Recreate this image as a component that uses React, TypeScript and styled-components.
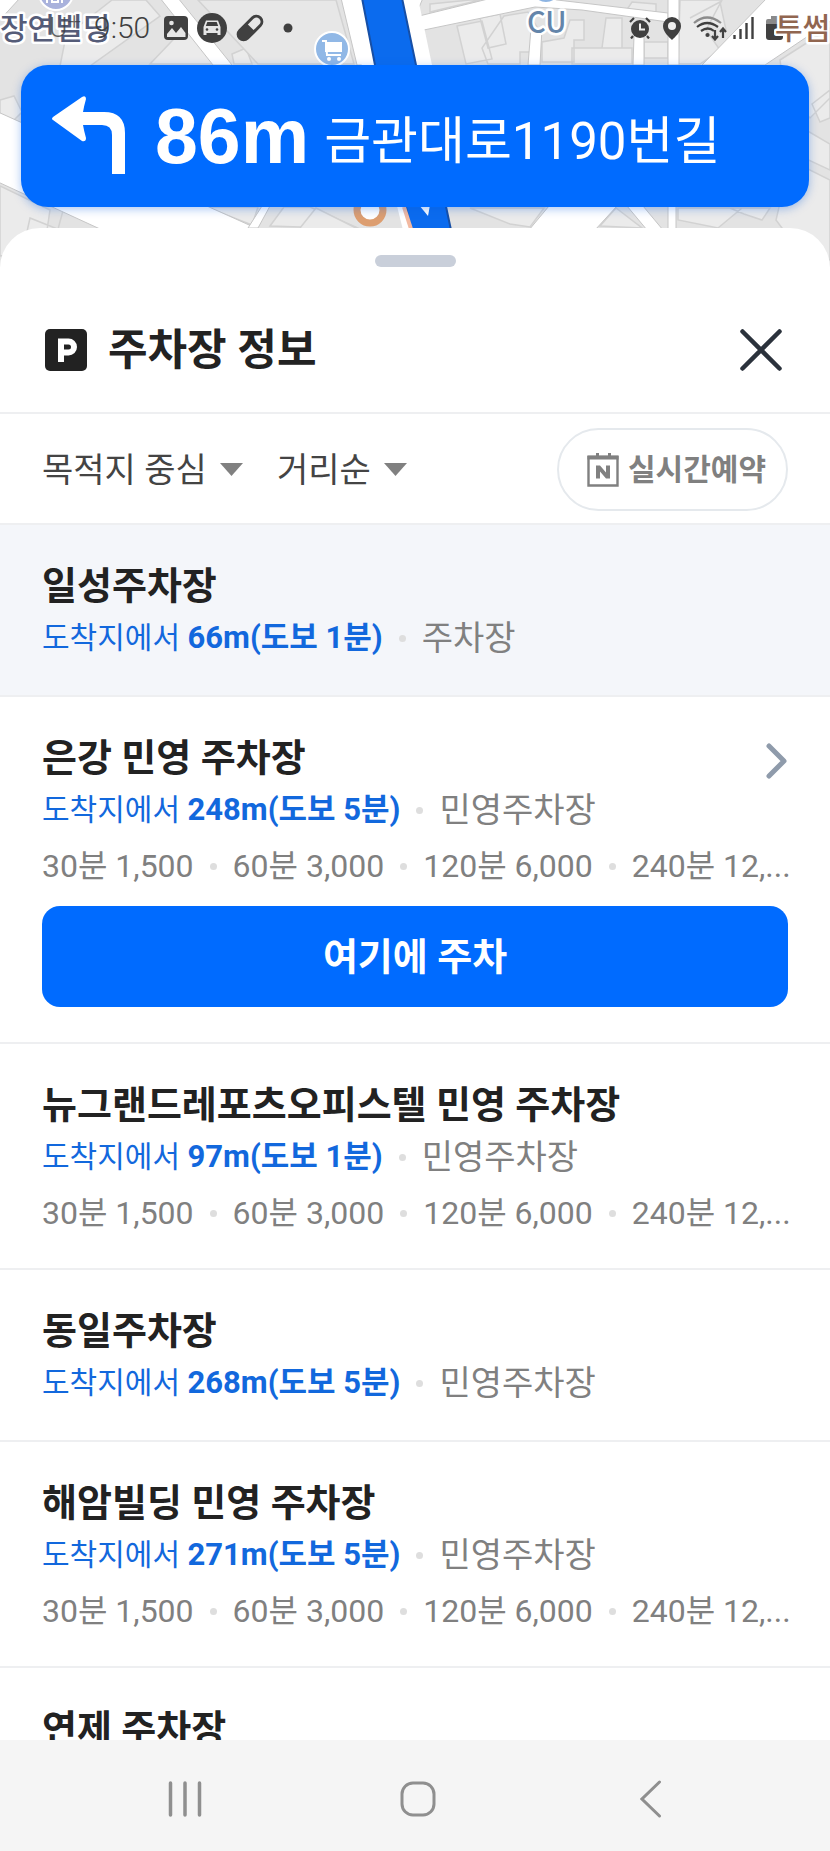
import React from 'react';
import styled, { createGlobalStyle } from 'styled-components';

const Global = createGlobalStyle`
  * { box-sizing: border-box; }
  html, body { margin: 0; background: #fff; }
  body, button, select { font-family: Roboto, 'Noto Sans CJK KR', sans-serif; }
  button, select { margin: 0; padding: 0; border: 0; background: none; color: inherit; cursor: pointer; }
  h1, h2, p, ul { margin: 0; padding: 0; }
  ul { list-style: none; }
  svg { display: block; flex: none; }
`;

const Screen = styled.div`
  display: flex;
  flex-direction: column;
  height: 100vh;
  overflow: hidden;
`;

const MapArea = styled.header`
  position: relative;
  flex: none;
  padding-bottom: 61px;
  overflow: hidden;
  background: #e3e3e3;
`;

const MapDrawing = styled.svg`
  position: absolute;
  inset: 0;
  width: 100%;
  height: 100%;
`;

const StatusBar = styled.div`
  position: relative;
  display: flex;
  align-items: center;
  justify-content: space-between;
  height: 56px;
  padding: 0 47px 0 49px;
  color: #404040;
`;

const StatusGroup = styled.div<{ $gap: number }>`
  display: flex;
  align-items: center;
  gap: ${(p) => p.$gap}px;
`;

const Carrier = styled.span`
  display: flex;
  margin-right: 4px;
  font-size: 28px;
  font-weight: 300;
  line-height: 32px;
  opacity: 0.8;

  sup {
    font-size: 24px;
    line-height: 20px;
  }
`;

const Clock = styled.time`
  margin-right: 5px;
  font-size: 30px;
  font-weight: 300;
  line-height: 36px;
`;

const Banner = styled.div`
  position: relative;
  display: flex;
  align-items: center;
  height: 142px;
  margin: 9px 21px 0;
  padding: 0 31px;
  border-radius: 27px;
  background: #006bff;
  box-shadow: 0 2px 10px rgba(0, 90, 220, 0.35);
  color: #fff;
  white-space: nowrap;
`;

const Distance = styled.strong`
  margin-left: 29px;
  font-family: 'Liberation Sans', sans-serif;
  font-size: 77px;
  line-height: 92px;
`;

const Road = styled.span`
  margin: 12px 0 0 15px;
  font-size: 51px;
  line-height: 72px;
`;

const Sheet = styled.main`
  position: relative;
  display: flex;
  flex-direction: column;
  flex: 1;
  min-height: 0;
  margin-top: -40px;
  border-radius: 40px 40px 0 0;
  background: #fff;
`;

const Handle = styled.div`
  flex: none;
  align-self: center;
  width: 81px;
  height: 12px;
  margin: 27px 0 21px;
  border-radius: 6px;
  background: #c9cfda;
`;

const TitleRow = styled.div`
  display: flex;
  flex: none;
  align-items: center;
  gap: 21px;
  height: 126px;
  padding: 0 48px 0 45px;
  border-bottom: 2px solid #eeeff1;
`;

const Title = styled.h1`
  flex: 1;
  color: #222;
  font-size: 43px;
  line-height: 60px;
`;

const IconButton = styled.button`
  display: grid;
  place-items: center;
  height: 56px;
`;

const FilterRow = styled.div`
  display: flex;
  flex: none;
  align-items: center;
  gap: 34px;
  height: 111px;
  padding: 2px 42px 0;
  border-bottom: 2px solid #eeeff1;
`;

const Filter = styled.label`
  display: flex;
  align-items: center;
  gap: 13px;
`;

const FilterSelect = styled.select`
  appearance: none;
  color: #444;
  font-size: 34px;
  line-height: 48px;
`;

const ReserveButton = styled.button`
  display: flex;
  align-items: center;
  gap: 9px;
  height: 83px;
  margin-left: auto;
  padding: 0 20px 0 28px;
  border: 2px solid #e5e9ed;
  border-radius: 42px;
  color: #808080;
  font-size: 30px;
  font-weight: 700;
  line-height: 44px;
`;

const List = styled.ul`
  flex: 1;
  min-height: 0;
  overflow-y: auto;
  scrollbar-width: none;
`;

const Lot = styled.li<{ $selected?: boolean }>`
  padding: 36px 42px 28px;
  border-bottom: 2px solid #eeeff1;
  background: ${(p) => (p.$selected ? '#f4f6fa' : '#fff')};
`;

const LotHead = styled.div`
  display: flex;
  align-items: flex-start;
  justify-content: space-between;
  height: 48px;
`;

const LotName = styled.h2`
  color: #222;
  font-size: 38px;
  line-height: 50px;
`;

const Line = styled.p<{ $height: number }>`
  display: flex;
  align-items: center;
  height: ${(p) => p.$height}px;
  color: #808080;
  font-size: 32px;
  line-height: 44px;
  white-space: nowrap;
`;

const Away = styled.span`
  color: #1268dd;
  font-size: 30px;
  white-space: pre;

  b {
    font-size: 31px;
  }
`;

const Kind = styled.span`
  font-size: 34px;
`;

const Dot = styled.i`
  flex: none;
  width: 7px;
  height: 7px;
  margin: 0 16px;
  border-radius: 50%;
  background: #dedede;
`;

const ParkButton = styled.button`
  display: block;
  width: 100%;
  height: 101px;
  margin: 13px 0 7px;
  border-radius: 18px;
  background: #006bff;
  color: #fff;
  font-size: 38px;
  font-weight: 700;
  line-height: 52px;
`;

const NavBar = styled.nav`
  display: grid;
  flex: none;
  grid-template-columns: repeat(3, 1fr);
  height: 111px;
  padding: 7px 63px 0 68px;
  background: #f5f5f5;
`;

const NavButton = styled.button`
  display: grid;
  place-items: center;
`;

const MapLabel = styled.text`
  font-family: 'Noto Sans CJK KR', sans-serif;
  font-weight: 500;
  stroke: #fff;
  stroke-width: 5px;
  stroke-linejoin: round;
  paint-order: stroke;
`;

function MapBackground() {
  return (
    <MapDrawing viewBox="0 0 830 268" preserveAspectRatio="xMidYMin slice" aria-hidden="true">
      <rect width="830" height="268" fill="#e3e3e3" />
      <g fill="#ebebeb" stroke="#d2d2d2" strokeWidth="1.5">
        <path d="M66 36 112 0h34l14 16-70 50H60z" />
        <path d="M150 64l40-42 26 42zM232 54l14-6 6 16h-18z" />
        <path d="M0 100l14-4 8 16-12 12-10-6z" />
        <path d="M236 0h100l18 64h-96l-60-64z" fill="#e7e7e7" />
        <path d="M0 186l50 24-6 40-44 6zM30 218l50 20-6 34H18z" />
        <path d="M64 207l-6 22M258 207l-6 18-46-18zM270 226l14-19h26l50 22z" />
        <path d="M300 228l16-20 40 20" />
        <path d="M457 26l25-5 10 38-26 5zM480 18l20-4 6 30-18 4zM504 16l24-4 12 20v20h-20v12h-32l-6-16z" />
        <path d="M570 20h14v20h-10v22h-32v-20l22-4zM606 18h16v30h-20zM572 48h60v16h-60z" />
        <path d="M644 42h24v16h-24zM430 4l40-4h10l-50 12zM632 2l24 2v10l-30-3z" />
        <path d="M680 0h42l-16 30 14 20-20 14h-22zM690 18l30-16 6 28" />
        <path d="M780 60l50-32v70l-20 20-26-30zM812 104l18-14v28l-10 4zM806 130l24 14v26l-30-14z" />
        <path d="M470 208h74l-14 19-20-3zM600 226l16-18 26 20zM678 208h64l-24 20-40-8zM730 208h40l-8 12-18-6z" />
        <path d="M790 160l40 20v80h-24l-30-40z" />
      </g>
      <g fill="#fff" stroke="#c6c6c6" strokeWidth="1">
        <path d="M-2 112 258 229H100L-2 182z" />
        <path d="M262 206l-14 22h10l12-22z" />
        <path d="M160-2h18l54 67h-19z" />
        <path d="M-2-2h22L-2 22z" />
        <path d="M404-2h12l6 66h-12zM341-2h82L415 17 492-2h48l128 15v9l-86-12-47-3-116 24-4 34h-58z" />
        <path d="M531 28h11l-2 37h-12zM634 36h10v29h-11zM668-2h11v67h-11z" />
        <path d="M767-2h65v22l-67 45h-63z" />
        <path d="M549 206h68l-22 24h-66zM627 206h16l20 24h-16zM668 206h8v24h-8z" />
      </g>
      <path d="M345-2h73l14 67 15 165h-44z" fill="#fff" />
      <path d="M362-2h40l14 67 35 165h-40l-36-165z" fill="#0b6bee" stroke="#174fa5" strokeWidth="2" />
      <path d="M404 207l7 22" stroke="#f2b9a1" strokeWidth="4" />
      <path d="M419 205l9 11 2-11z" fill="#fff" />
      <circle cx="56" cy="-7" r="17" fill="#a9b2dc" stroke="#fff" strokeWidth="2" />
      <path d="M47 0v3M52-2v4h6v-4M62-2v5" fill="none" stroke="#fff" strokeWidth="2" />
      <circle cx="546" cy="-12" r="15" fill="#8db4e2" stroke="#fff" strokeWidth="2" />
      <circle cx="332" cy="49" r="17" fill="#91b8e6" stroke="#fff" strokeWidth="2" />
      <path d="M325 42h17v10h-17z" fill="#fff" />
      <path d="M322 41h4l1 14h14" fill="none" stroke="#fff" strokeWidth="2" />
      <circle cx="329" cy="59" r="2" fill="#fff" />
      <circle cx="339" cy="59" r="2" fill="#fff" />
      <circle cx="370" cy="210" r="13" fill="#fff" stroke="#dd9e70" strokeWidth="7" />
      <MapLabel x="0" y="39" fontSize="30" fill="#555c78">장연빌딩</MapLabel>
      <MapLabel x="527" y="33" fontSize="29" fill="#6485aa">CU</MapLabel>
    </MapDrawing>
  );
}

/* The café name runs over the battery icon at the right edge. */
const CafeLabel = styled.svg`
  position: absolute;
  top: 0;
  right: 0;
`;

const IconImage = () => (
  <svg width="24" height="24" viewBox="0 0 24 24" aria-hidden="true">
    <rect width="24" height="24" rx="4" fill="#404040" />
    <path d="M2.500 15l5-5 5 6 4-5 5 6v-12" fill="none" />
    <path d="M3 18l5-6 4 5 5-6 4.500 6v4H3z" fill="#e6e6e6" />
    <circle cx="7.500" cy="7" r="2.300" fill="#e6e6e6" />
  </svg>
);

const IconCar = () => (
  <svg width="30" height="30" viewBox="0 0 30 30" aria-hidden="true">
    <circle cx="15" cy="15" r="15" fill="#404040" />
    <path d="M9 7.500h12l2.500 6.500v8h-3v-2h-11v2h-3v-8z" fill="#e6e6e6" />
    <path d="M10.300 9h9.400l1.500 4H8.800z" fill="#404040" />
    <circle cx="10" cy="16.500" r="1.300" fill="#404040" />
    <circle cx="20" cy="16.500" r="1.300" fill="#404040" />
  </svg>
);

const IconPill = () => (
  <svg width="28" height="28" viewBox="0 0 28 28" aria-hidden="true">
    <g transform="rotate(-45 14 14)">
      <rect x="-2" y="7" width="32" height="14" rx="7" fill="#404040" />
      <path d="M15 10h8a4 4 0 0 1 0 8h-8z" fill="#e6e6e6" />
    </g>
  </svg>
);

const IconAlarm = () => (
  <svg width="22" height="22" viewBox="0 0 22 22" aria-hidden="true">
    <circle cx="11" cy="12" r="9" fill="#404040" />
    <path d="M1 5l4-4M21 5l-4-4M4 19l-2 2.500M18 19l2 2.500" stroke="#404040" strokeWidth="2.200" />
    <path d="M11 6.500v6h5" fill="none" stroke="#eee" strokeWidth="2" />
  </svg>
);

const IconPin = () => (
  <svg width="18" height="23" viewBox="0 0 18 23" aria-hidden="true">
    <path d="M9 0a9 9 0 0 1 9 9c0 6-6 11-9 14C6 20 0 15 0 9a9 9 0 0 1 9-9z" fill="#404040" />
    <circle cx="9" cy="9" r="4" fill="#eee" />
  </svg>
);

const IconWifi = () => (
  <svg width="34" height="25" viewBox="0 0 34 25" fill="none" stroke="#404040" strokeWidth="2.200" aria-hidden="true">
    <path d="M1 7Q14-4 28 7" stroke="#8c8c8c" />
    <path d="M4 11q10-8 21 0M8 15q7-5 13 0" />
    <circle cx="14.500" cy="19" r="1" fill="#404040" stroke="#404040" />
    <path d="M22 14v9M19 20l3 3.500 3-3.500M30 22v-9M27 16l3-3.500 3 3.500" />
  </svg>
);

const IconSignal = () => (
  <svg width="21" height="22" viewBox="0 0 21 22" stroke="#404040" strokeWidth="2.400" aria-hidden="true">
    <path d="M1.500 18v4M7.500 12v10M13.500 6v16M19.500 0v22" />
  </svg>
);

const IconBattery = () => (
  <svg width="17" height="24" viewBox="0 0 17 24" aria-hidden="true">
    <path d="M5 0h7v3h3a2 2 0 0 1 2 2v4H0V5a2 2 0 0 1 2-2h3z" fill="#8a8a8a" />
    <path d="M0 8h17v13a3 3 0 0 1-3 3H3a3 3 0 0 1-3-3z" fill="#404040" />
  </svg>
);

const TurnLeft = () => (
  <svg width="74" height="80" viewBox="0 0 74 80" role="img" aria-label="좌회전">
    <path
      d="M1 21 30 1q4-2 4 2-2 7-3 13h21q21 0 21 21v41H60V39q0-10-10-10H31q1 6 3 13 0 4-4 3L1 24q-2-1 0-3z"
      fill="#fff"
    />
  </svg>
);

const ParkingBadge = () => (
  <svg width="42" height="42" viewBox="0 0 42 42" aria-hidden="true">
    <rect width="42" height="42" rx="5" fill="#222" />
    <path d="M16 33V12.500h7.500a5.500 5.500 0 0 1 0 11H16" fill="none" stroke="#fff" strokeWidth="6" />
  </svg>
);

const CloseIcon = () => (
  <svg width="42" height="42" viewBox="0 0 42 42" aria-hidden="true">
    <path d="M2.500 2.500l37 37M39.500 2.500l-37 37" stroke="#2b323c" strokeWidth="4.500" strokeLinecap="round" />
  </svg>
);

const Triangle = () => (
  <svg width="23" height="13" viewBox="0 0 23 13" aria-hidden="true">
    <path d="M0 0h23L11.500 13z" fill="#808080" />
  </svg>
);

const CalendarIcon = () => (
  <svg width="32" height="34" viewBox="0 0 32 34" aria-hidden="true">
    <path d="M1.500 4h29v28.500h-29z" fill="none" stroke="#808080" strokeWidth="2.400" />
    <path d="M0.500 2.500h31v4h-31zM9 0h3v4H9zM21 0h3v4h-3z" fill="#808080" />
    <path d="M9 12.500h4l6 7v-7h4v13h-4l-6-7v7H9z" fill="#808080" />
  </svg>
);

const Chevron = () => (
  <svg width="22" height="38" viewBox="0 0 22 38" aria-hidden="true">
    <path d="M3 4l15 15L3 34" fill="none" stroke="#8f9bab" strokeWidth="5" strokeLinecap="round" strokeLinejoin="round" />
  </svg>
);

type LotData = {
  name: string;
  distance?: string;
  kind?: string;
  prices?: string[];
  selected?: boolean;
  open?: boolean;
};

const PRICES = ['30분 1,500', '60분 3,000', '120분 6,000', '240분 12,...'];

const LOTS: LotData[] = [
  { name: '일성주차장', distance: '66m(도보 1분)', kind: '주차장', selected: true },
  { name: '은강 민영 주차장', distance: '248m(도보 5분)', kind: '민영주차장', prices: PRICES, open: true },
  { name: '뉴그랜드레포츠오피스텔 민영 주차장', distance: '97m(도보 1분)', kind: '민영주차장', prices: PRICES },
  { name: '동일주차장', distance: '268m(도보 5분)', kind: '민영주차장' },
  { name: '해암빌딩 민영 주차장', distance: '271m(도보 5분)', kind: '민영주차장', prices: PRICES },
  { name: '연제 주차장' },
];

function LotItem({ lot }: { lot: LotData }) {
  return (
    <Lot $selected={lot.selected}>
      <LotHead>
        <LotName>{lot.name}</LotName>
        {lot.open && (
          <IconButton type="button" aria-label="상세 보기">
            <Chevron />
          </IconButton>
        )}
      </LotHead>
      {lot.distance && (
        <Line $height={58}>
          <Away>도착지에서 <b>{lot.distance}</b></Away>
          <Dot />
          <Kind>{lot.kind}</Kind>
        </Line>
      )}
      {lot.prices && (
        <Line $height={54}>
          {lot.prices.map((price, i) => (
            <React.Fragment key={price}>
              {i > 0 && <Dot />}
              <span>{price}</span>
            </React.Fragment>
          ))}
        </Line>
      )}
      {lot.open && <ParkButton type="button">여기에 주차</ParkButton>}
    </Lot>
  );
}

export default function App() {
  return (
    <Screen>
      <Global />
      <MapArea>
        <MapBackground />
        <StatusBar>
          <StatusGroup $gap={9}>
            <Carrier>U<sup>+</sup></Carrier>
            <Clock>9:50</Clock>
            <IconImage />
            <IconCar />
            <IconPill />
            <svg width="28" height="10" viewBox="0 0 28 10" aria-hidden="true">
              <circle cx="15" cy="5" r="4.500" fill="#404040" />
            </svg>
          </StatusGroup>
          <StatusGroup $gap={12}>
            <IconAlarm />
            <IconPin />
            <StatusGroup $gap={6}>
              <IconWifi />
              <IconSignal />
            </StatusGroup>
            <IconBattery />
          </StatusGroup>
          <CafeLabel width="56" height="56" viewBox="0 0 56 56">
            <MapLabel x="1" y="39" fontSize="30" fill="#916650">투썸</MapLabel>
          </CafeLabel>
        </StatusBar>
        <Banner>
          <TurnLeft />
          <Distance>86m</Distance>
          <Road>금관대로1190번길</Road>
        </Banner>
      </MapArea>
      <Sheet>
        <Handle />
        <TitleRow>
          <ParkingBadge />
          <Title>주차장 정보</Title>
          <IconButton type="button" aria-label="닫기">
            <CloseIcon />
          </IconButton>
        </TitleRow>
        <FilterRow>
          <Filter>
            <FilterSelect aria-label="중심">
              <option>목적지 중심</option>
            </FilterSelect>
            <Triangle />
          </Filter>
          <Filter>
            <FilterSelect aria-label="정렬">
              <option>거리순</option>
            </FilterSelect>
            <Triangle />
          </Filter>
          <ReserveButton type="button">
            <CalendarIcon />
            실시간예약
          </ReserveButton>
        </FilterRow>
        <List>
          {LOTS.map((lot) => (
            <LotItem key={lot.name} lot={lot} />
          ))}
        </List>
      </Sheet>
      <NavBar>
        <NavButton type="button" aria-label="최근 앱">
          <svg width="34" height="36" viewBox="0 0 34 36" stroke="#8f8f8f" strokeWidth="3.500" strokeLinecap="round">
            <path d="M2.500 2v32M17 2v32M31.500 2v32" />
          </svg>
        </NavButton>
        <NavButton type="button" aria-label="홈">
          <svg width="36" height="36" viewBox="0 0 36 36">
            <rect x="2" y="2" width="32" height="32" rx="11" fill="none" stroke="#8f8f8f" strokeWidth="3" />
          </svg>
        </NavButton>
        <NavButton type="button" aria-label="뒤로">
          <svg width="22" height="38" viewBox="0 0 22 38" fill="none" stroke="#8f8f8f" strokeWidth="3" strokeLinecap="round">
            <path d="M19.500 2L2 19l17.500 17" />
          </svg>
        </NavButton>
      </NavBar>
    </Screen>
  );
}
